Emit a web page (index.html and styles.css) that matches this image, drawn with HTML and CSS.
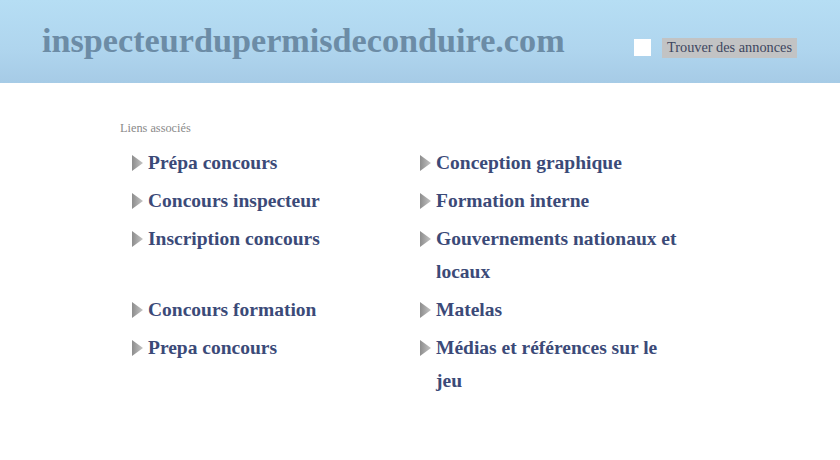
FILE: index.html
```html
<!DOCTYPE html>
<html lang="fr">
<head>
<meta charset="utf-8">
<title>inspecteurdupermisdeconduire.com</title>
<link rel="stylesheet" href="styles.css">
</head>
<body>
<header class="header">
  <div class="logo">inspecteurdupermisdeconduire.com</div>
  <form class="search">
    <span class="search-box"></span>
    <span class="search-btn">Trouver des annonces</span>
  </form>
</header>
<main class="main">
  <div class="caption">Liens associés</div>
  <div class="links">
    <a class="link" href="#">Prépa concours</a>
    <a class="link" href="#">Conception graphique</a>
    <a class="link" href="#">Concours inspecteur</a>
    <a class="link" href="#">Formation interne</a>
    <a class="link" href="#">Inscription concours</a>
    <a class="link" href="#">Gouvernements nationaux et locaux</a>
    <a class="link" href="#">Concours formation</a>
    <a class="link" href="#">Matelas</a>
    <a class="link" href="#">Prepa concours</a>
    <a class="link" href="#">Médias et références sur le jeu</a>
  </div>
</main>
</body>
</html>
```
FILE: styles.css
```css
html, body {
  margin: 0;
  padding: 0;
  background: #ffffff;
  font-family: "Liberation Serif", "Times New Roman", serif;
}
.header {
  height: 83px;
  background: linear-gradient(to bottom, #b6def4 0%, #afd5ee 60%, #a6cbe6 100%);
  display: flex;
  align-items: center;
  box-sizing: border-box;
  padding-left: 42px;
}
.logo {
  font-size: 34.2px;
  font-weight: bold;
  color: #6c8ca6;
  width: 592px;
  margin-top: -2px;
}
.search {
  display: flex;
  align-items: center;
  gap: 11px;
  margin: 0;
  margin-top: 12px;
}
.search-box {
  width: 17px;
  height: 17px;
  background: #ffffff;
}
.search-btn {
  background: #c2c3c4;
  color: #3d4660;
  font-size: 14.3px;
  padding: 1px 5px 2px 5px;
  line-height: 17px;
}
.main {
  padding: 38px 0 0 120px;
}
.caption {
  font-size: 12.3px;
  color: #8a8a8a;
}
.links {
  display: grid;
  grid-template-columns: 288px 268px;
  margin: 10px 0 0 12px;
  row-gap: 5px;
}
.link {
  display: block;
  position: relative;
  padding-left: 16px;
  font-size: 19.5px;
  font-weight: bold;
  line-height: 33px;
  color: #3b4a78;
  text-decoration: none;
}
.link::before {
  content: "";
  position: absolute;
  left: 0;
  top: 9px;
  width: 11px;
  height: 16px;
  background: linear-gradient(to right, #8d8d8d, #c4c4c4);
  clip-path: polygon(0 0, 100% 50%, 0 100%);
}
```
